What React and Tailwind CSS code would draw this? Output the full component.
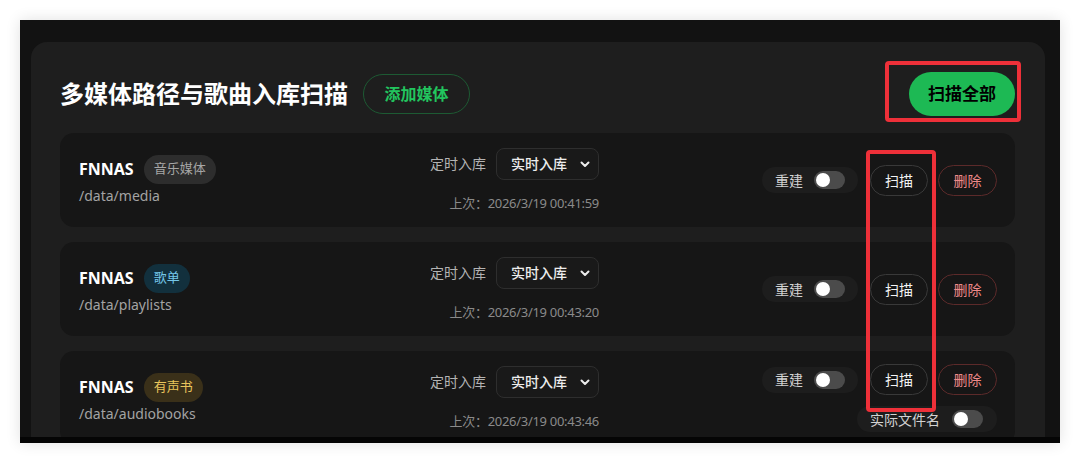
import React from "react";

const FONT = { fontFamily: '"Noto Sans", "Noto Sans CJK SC", sans-serif' };

function Chevron() {
  return (
    <svg width="12" height="12" viewBox="0 0 24 24" fill="none" stroke="#ececec" strokeWidth="4" strokeLinecap="round" strokeLinejoin="round">
      <path d="M5 9l7 7 7-7" />
    </svg>
  );
}

function Toggle() {
  return (
    <div className="w-[31px] h-[18px] rounded-full bg-[#4b4b4b] flex items-center pl-[2px]">
      <div className="w-[14px] h-[14px] rounded-full bg-white" />
    </div>
  );
}

function Badge({ text, cls }) {
  return (
    <span className={`h-[29px] px-[10px] rounded-full text-[13px] flex items-center ${cls}`}>{text}</span>
  );
}

function Row({ path, badge, badgeCls, time, extra }) {
  return (
    <div className="h-[94px] shrink-0 rounded-[14px] bg-[#161616] pl-[19px] pr-[18px] flex items-center">
      <div className="flex-1 min-w-0 flex flex-col">
        <div className="flex items-center gap-[10px]">
          <span className="text-[16px] font-bold text-white">FNNAS</span>
          <Badge text={badge} cls={badgeCls} />
        </div>
        <div className="text-[14px] text-[#a3a3a3] leading-[20px] mt-[2px]">{path}</div>
      </div>
      <div className="w-[200px] flex flex-col items-end">
        <div className="flex items-center gap-[10px]">
          <span className="text-[14px] text-[#b3b3b3]">定时入库</span>
          <div className="w-[103px] h-[32px] rounded-[8px] border border-[#2e2e2e] bg-[#191919] flex items-center justify-between pl-[14px] pr-[7px]">
            <span className="text-[14px] font-medium text-[#ececec]">实时入库</span>
            <Chevron />
          </div>
        </div>
        <div className="text-[13px] text-[#8a8a8a] leading-[20px] mt-[13px] tracking-[-0.3px]">上次：{time}</div>
      </div>
      <div className="w-[398px] flex flex-col items-end">
        <div className="flex items-center">
          <div className="h-[26px] rounded-full bg-[#1d1d1d] pl-[13px] pr-[13px] flex items-center gap-[11px]">
            <span className="text-[14px] text-[#d2d2d2]">重建</span>
            <Toggle />
          </div>
          <button className="ml-[12px] w-[58px] h-[31px] rounded-full border border-[#393939] text-[14px] text-[#f2f2f2] flex items-center justify-center">扫描</button>
          <button className="ml-[10px] w-[59px] h-[31px] rounded-full border border-[#5c2a2a] text-[14px] text-[#ee8a8a] flex items-center justify-center">删除</button>
        </div>
        {extra && (
          <div className="mt-[11px] h-[26px] w-[140px] rounded-full bg-[#1d1d1d] pl-[13px] pr-[14px] flex items-center gap-[12px]">
            <span className="text-[14px] text-[#d2d2d2]">实际文件名</span>
            <Toggle />
          </div>
        )}
      </div>
    </div>
  );
}

export default function App() {
  return (
    <div className="min-h-screen bg-white p-[20px]" style={FONT}>
      <div className="relative w-[1040px] h-[423px] bg-[#121212] border-b-[6px] border-[#050505] overflow-hidden pl-[11px] pt-[22px] shadow-[0_0_14px_rgba(0,0,0,0.12)]">
        <div className="w-[1014px] h-[500px] rounded-t-[16px] bg-[#1e1e1e] pl-[29px] pr-[30px] pt-[30px]">
          <div className="h-[44px] flex items-center justify-between">
            <div className="flex items-center">
              <h1 className="text-[24px] font-bold text-white leading-none">多媒体路径与歌曲入库扫描</h1>
              <button className="ml-[15px] w-[107px] h-[40px] rounded-full border border-[#1d5a33] text-[16px] font-bold text-[#22c55e] flex items-center justify-center">添加媒体</button>
            </div>
            <button className="w-[106px] h-[44px] rounded-full bg-[#1db954] text-[17px] font-bold text-black flex items-center justify-center">扫描全部</button>
          </div>
          <div className="mt-[17px] flex flex-col gap-[15px]">
            <Row path="/data/media" badge="音乐媒体" badgeCls="bg-[#2d2d2d] text-[#a6a6a6]" time="2026/3/19 00:41:59" />
            <Row path="/data/playlists" badge="歌单" badgeCls="bg-[#12303d] text-[#74c6e8]" time="2026/3/19 00:43:20" />
            <Row path="/data/audiobooks" badge="有声书" badgeCls="bg-[#3a3019] text-[#e9c55c]" time="2026/3/19 00:43:46" extra />
          </div>
        </div>
        <div className="absolute left-[865px] top-[41px] w-[136px] h-[61px] border-[4px] border-[#ee3039] rounded-[4px]" />
        <div className="absolute left-[846px] top-[130px] w-[70px] h-[262px] border-[4px] border-[#ee3039] rounded-[4px]" />
      </div>
    </div>
  );
}
